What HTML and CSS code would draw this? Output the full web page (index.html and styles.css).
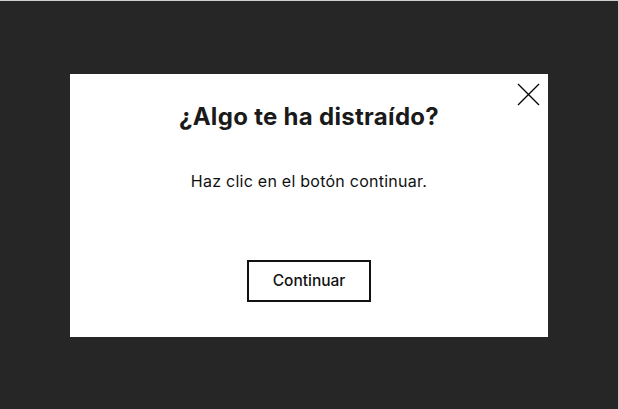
FILE: index.html
```html
<!DOCTYPE html>
<html lang="es">
<head>
<meta charset="utf-8">
<link rel="stylesheet" href="styles.css">
</head>
<body>
<div class="overlay">
  <div class="modal">
    <button class="close" aria-label="Cerrar">
      <svg width="23" height="23" viewBox="0 0 23 23"><path d="M1 1L22 22M22 1L1 22" stroke="#000" stroke-width="1.3" fill="none"/></svg>
    </button>
    <h1 class="title">¿Algo te ha distraído?</h1>
    <p class="text">Haz clic en el botón continuar.</p>
    <button class="continue">Continuar</button>
  </div>
</div>
</body>
</html>
```
FILE: styles.css
```css
html, body {
  margin: 0;
  padding: 0;
}
body {
  width: 619px;
  height: 409px;
  box-sizing: border-box;
  background: #262626;
  border-top: 1px solid #cfcfcf;
  border-right: 1px solid #cfcfcf;
  font-family: "Inter", "Open Sans", sans-serif;
}
.overlay {
  height: 408px;
  display: flex;
  align-items: center;
  justify-content: center;
}
.modal {
  position: relative;
  width: 478px;
  height: 263px;
  background: #fff;
  box-sizing: border-box;
  display: flex;
  flex-direction: column;
  align-items: center;
  padding-top: 27px;
}
.close {
  position: absolute;
  top: 9px;
  right: 8px;
  padding: 0;
  border: 0;
  background: none;
  line-height: 0;
}
.title {
  margin: 0;
  font-size: 24px;
  line-height: 32px;
  font-weight: 700;
  letter-spacing: 0.3px;
  color: #1a1a1a;
}
.text {
  margin: 38px 0 0;
  font-size: 16px;
  line-height: 20px;
  letter-spacing: 0.25px;
  color: #111;
}
.continue {
  margin-top: 69px;
  width: 124px;
  height: 42px;
  border: 2px solid #111;
  background: #fff;
  font-family: "Inter", sans-serif;
  font-size: 15.5px;
  font-weight: 500;
  color: #111;
}
```
